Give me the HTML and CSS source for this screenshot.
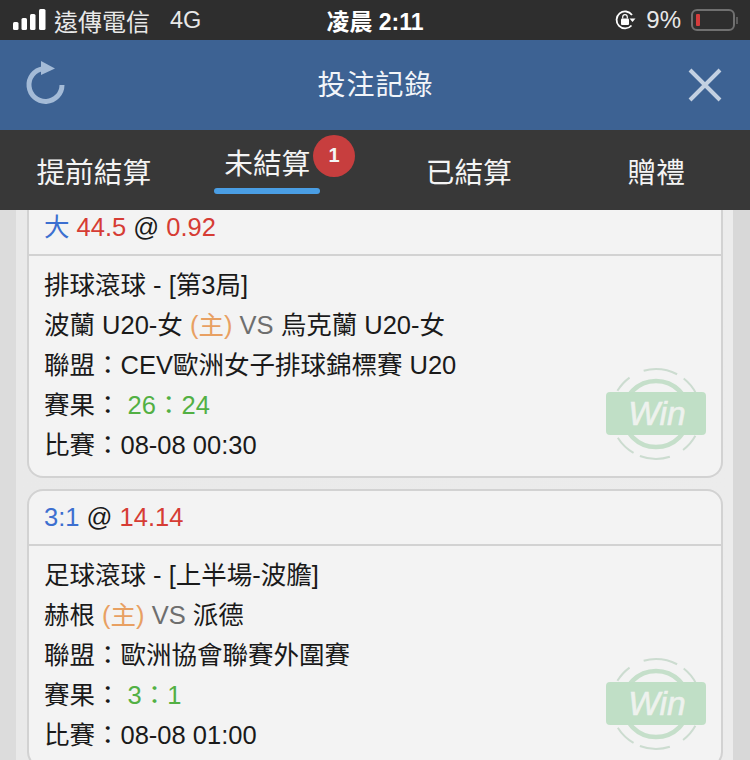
FILE: index.html
```html
<!DOCTYPE html>
<html lang="zh-Hant">

<head>
    <meta charset="UTF-8">
    <meta name="viewport" content="width=device-width, initial-scale=1.0">
    <title>投注記錄</title>
    <link rel="stylesheet" href="styles.css">
</head>

<body>
    <div class="status-bar">
        <div class="status-left">
            <svg class="signal" width="33" height="22" viewBox="0 0 33 22">
                <rect x="0" y="13" width="5.500" height="8" rx="1.500" fill="#fff" />
                <rect x="8.500" y="9" width="5.500" height="12" rx="1.500" fill="#fff" />
                <rect x="17" y="5" width="5.500" height="16" rx="1.500" fill="#fff" />
                <rect x="26" y="0" width="6.500" height="21" rx="1.500" fill="#fff" />
            </svg>
            <span class="carrier">遠傳電信</span>
            <span class="network">4G</span>
        </div>
        <div class="status-time">凌晨 2:11</div>
        <div class="status-right">
            <svg class="lock" width="22" height="22" viewBox="0 0 22 22">
                <path d="M17.500 16.500A8.500 8.500 0 1 1 18 6" fill="none" stroke="#fff" stroke-width="1.800" />
                <path d="M15.500 9.500h6l-3 3.600z" fill="#fff" />
                <rect x="7" y="9.500" width="8" height="6.500" rx="1" fill="#fff" />
                <path d="M8.700 9.500V8a2.300 2.300 0 0 1 4.600 0v1.500" fill="none" stroke="#fff" stroke-width="1.200" />
            </svg>
            <span class="percent">9%</span>
            <div class="battery">
                <div class="battery-fill"></div>
            </div>
            <div class="battery-cap"></div>
        </div>
    </div>

    <div class="title-bar">
        <svg class="refresh" width="40" height="50" viewBox="0 0 40 50">
            <path d="M37 25A16.500 16.500 0 1 1 18 8.600" fill="none" stroke="#a4bbd7" stroke-width="5" />
            <path d="M16 1l14 7.500L16 15z" fill="#a4bbd7" />
        </svg>
        <div class="title">投注記錄</div>
        <svg class="close" width="34" height="34" viewBox="0 0 34 34">
            <path d="M2 2l30 30M32 2L2 32" stroke="#c4d1e2" stroke-width="4" />
        </svg>
    </div>

    <div class="tabs">
        <div class="tab">提前結算</div>
        <div class="tab tab-active">
            未結算
            <span class="badge">1</span>
        </div>
        <div class="tab">已結算</div>
        <div class="tab">贈禮</div>
    </div>

    <div class="list">
        <div class="card card-cut">
            <div class="card-head head-cut"><span class="blue">大</span> <span class="red">44.5</span> @ <span class="red">0.92</span></div>
            <div class="card-body">
                <div class="row">排球滾球 - [第3局]</div>
                <div class="row">波蘭 U20-女 <span class="orange">(主)</span> <span class="gray">VS</span> 烏克蘭 U20-女</div>
                <div class="row">聯盟：CEV歐洲女子排球錦標賽 U20</div>
                <div class="row">賽果： <span class="green">26：24</span></div>
                <div class="row">比賽：08-08 00:30</div>
                <div class="win-stamp">
                    <svg width="100" height="92" viewBox="0 0 100 92">
                        <circle cx="50" cy="46" r="33" fill="none" stroke="#c5dfca" stroke-width="4.500" />
                        <circle class="win-ring" cx="50" cy="46" r="45" pathLength="360" />
                        <rect x="0" y="24" width="100" height="43" rx="4" fill="#c0dfc6" />
                    </svg>
                    <span class="win-text">Win</span>
                </div>
            </div>
        </div>

        <div class="card">
            <div class="card-head"><span class="blue">3:1</span> @ <span class="red">14.14</span></div>
            <div class="card-body">
                <div class="row">足球滾球 - [上半場-波膽]</div>
                <div class="row">赫根 <span class="orange">(主)</span> <span class="gray">VS</span> 派德</div>
                <div class="row">聯盟：歐洲協會聯賽外圍賽</div>
                <div class="row">賽果： <span class="green">3：1</span></div>
                <div class="row">比賽：08-08 01:00</div>
                <div class="win-stamp">
                    <svg width="100" height="92" viewBox="0 0 100 92">
                        <circle cx="50" cy="46" r="33" fill="none" stroke="#c5dfca" stroke-width="4.500" />
                        <circle class="win-ring" cx="50" cy="46" r="45" pathLength="360" />
                        <rect x="0" y="24" width="100" height="43" rx="4" fill="#c0dfc6" />
                    </svg>
                    <span class="win-text">Win</span>
                </div>
            </div>
        </div>
    </div>
</body>

</html>
```

FILE: styles.css
```css
html,
body {
    margin: 0;
    padding: 0;
}

body {
    width: 750px;
    height: 760px;
    overflow: hidden;
    background-color: #e9e9e9;
    color: #1a1a1a;
    font-family: "Liberation Sans", "Noto Sans CJK TC", sans-serif;
}

.status-bar {
    height: 40px;
    padding: 0 10px 0 13px;
    box-sizing: border-box;
    background-color: #2e2e2e;
    color: #fff;
    display: grid;
    grid-template-columns: 1fr auto 1fr;
    align-items: center;
    font-size: 24px;
}

.status-left {
    display: flex;
    align-items: center;
}

.signal {
    margin-right: 8px;
}

.carrier {
    color: #e8e8e8;
}

.network {
    margin-left: 20px;
    padding-top: 1px;
    font-size: 23.5px;
    color: #e8e8e8;
}

.status-time {
    margin-right: 3px;
    font-size: 23px;
    font-weight: bold;
}

.status-right {
    display: flex;
    align-items: center;
    justify-content: flex-end;
    color: #e8e8e8;
    font-size: 24px;
}

.lock {
    margin-right: 10px;
}

.percent {
    margin-right: 10px;
}

.battery {
    width: 44px;
    height: 22px;
    padding: 3px;
    box-sizing: border-box;
    border: 2px solid #707070;
    border-radius: 6px;
}

.battery-fill {
    width: 4px;
    height: 100%;
    border-radius: 1px;
    background-color: #d43c3c;
}

.battery-cap {
    width: 2px;
    height: 7px;
    margin-left: 1px;
    margin-right: 2px;
    background-color: #5c5c5c;
}

.title-bar {
    height: 90px;
    padding: 0 28px 0 25px;
    box-sizing: border-box;
    background-color: #3d6293;
    display: grid;
    grid-template-columns: 1fr auto 1fr;
    align-items: center;
}

.close {
    justify-self: end;
}

.title {
    margin-left: 4px;
    padding-bottom: 4px;
    color: #f2f5f9;
    font-size: 28px;
    letter-spacing: 1px;
}

.tabs {
    height: 80px;
    background-color: #383838;
    display: grid;
    grid-template-columns: repeat(4, 1fr);
    color: #f4f4f4;
    font-size: 28.7px;
}

.tab {
    display: flex;
    align-items: center;
    justify-content: center;
}

.tab-active {
    position: relative;
    padding: 0 28px 17px 0;
}

.tab-active::after {
    content: "";
    position: absolute;
    left: 26.5px;
    bottom: 16px;
    width: 106px;
    height: 6px;
    border-radius: 3px;
    background-color: #4a9ee4;
}

.badge {
    position: absolute;
    top: 5px;
    left: 125.5px;
    width: 42px;
    height: 42px;
    border-radius: 50%;
    background-color: #c73e3e;
    color: #f5f5f5;
    font-size: 20px;
    font-weight: bold;
    line-height: 40px;
    text-align: center;
}

.list {
    padding: 0 27px;
    display: flex;
    flex-direction: column;
    gap: 11px;
    background: linear-gradient(to right, #dcdcdc 16px, #e9e9e9 16px, #ececec 733px, #d8d8d8 733px);
}

.card {
    border: 2px solid #d2d2d2;
    border-radius: 16px;
    background-color: #f3f3f3;
    font-size: 25.5px;
}

.card-cut {
    border-top: none;
    border-radius: 0 0 16px 16px;
}

.card-head {
    height: 53px;
    line-height: 53px;
    padding-left: 15px;
    white-space: pre;
    border-bottom: 2px solid #d2d2d2;
}

.head-cut {
    height: 44px;
    line-height: 35px;
}

.card-body {
    position: relative;
    padding: 9px 15px 11px;
}

.row {
    height: 40px;
    line-height: 40px;
    white-space: nowrap;
}

.blue {
    color: #3c6fd0;
}

.red {
    color: #d63c34;
}

.orange {
    color: #e8a062;
}

.gray {
    color: #6e6e6e;
}

.green {
    color: #52b043;
}

.win-stamp {
    position: absolute;
    right: 15px;
    bottom: 16px;
    width: 100px;
    height: 92px;
}

.win-ring {
    fill: none;
    stroke: #ccdcd0;
    stroke-width: 2;
    stroke-dasharray: 24 19 39 9 28 63 23 20 44 10 25 56;
    stroke-dashoffset: -29;
}

.win-text {
    position: absolute;
    left: 2px;
    right: 0;
    top: 24px;
    height: 43px;
    line-height: 43px;
    text-align: center;
    color: #eef2ee;
    -webkit-text-stroke: 0.6px #eef2ee;
    font-size: 33.5px;
    font-style: italic;
}
```
